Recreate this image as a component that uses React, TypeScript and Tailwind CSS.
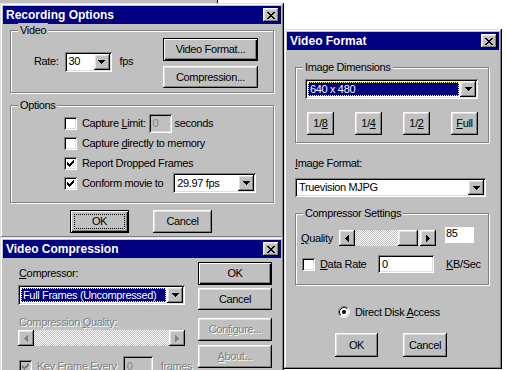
import type { ReactNode } from "react";

const winBevel =
  "shadow-[inset_-1px_-1px_0_#000,inset_1px_1px_0_#dfdfdf,inset_-2px_-2px_0_#808080,inset_2px_2px_0_#fff]";
const raised =
  "shadow-[inset_-1px_-1px_0_#000,inset_1px_1px_0_#fff,inset_-2px_-2px_0_#808080,inset_2px_2px_0_#dfdfdf]";
const defBevel =
  "shadow-[inset_0_0_0_1px_#000,inset_2px_2px_0_#fff,inset_-2px_-2px_0_#000,inset_-3px_-3px_0_#808080]";
const sunken =
  "shadow-[inset_1px_1px_0_#808080,inset_-1px_-1px_0_#fff,inset_2px_2px_0_#000,inset_-2px_-2px_0_#dfdfdf]";
const dim = "text-[#808080] [text-shadow:1px_1px_0_#fff]";
const checker = "bg-[repeating-conic-gradient(#c0c0c0_0_25%,#fff_0_50%)] bg-[length:2px_2px]";

function U({ children }: { children: ReactNode }) {
  return <span className="underline decoration-1 underline-offset-[1px]">{children}</span>;
}

function CloseBtn() {
  return (
    <div className={`w-[16px] h-[14px] bg-[#c0c0c0] flex items-center justify-center ${raised}`}>
      <svg width="8" height="7" viewBox="0 0 8 7" shapeRendering="crispEdges">
        <path
          d="M0 0h2v1H0z M6 0h2v1H6z M1 1h2v1H1z M5 1h2v1H5z M2 2h4v1H2z M3 3h2v1H3z M2 4h4v1H2z M1 5h2v1H1z M5 5h2v1H5z M0 6h2v1H0z M6 6h2v1H6z"
          fill="#000"
        />
      </svg>
    </div>
  );
}

function Win({ title, className, children }: { title: string; className: string; children: ReactNode }) {
  return (
    <div className={`absolute bg-[#c0c0c0] p-[3px] flex flex-col overflow-hidden ${winBevel} ${className}`}>
      <div className="h-[18px] shrink-0 bg-[#000080] flex items-center justify-between pl-[3px] pr-[2px]">
        <span className="text-white font-bold text-[12px] leading-none tracking-normal">{title}</span>
        <CloseBtn />
      </div>
      {children}
    </div>
  );
}

function Btn({
  children,
  className = "",
  def = false,
  focus = false,
  disabled = false,
}: {
  children: ReactNode;
  className?: string;
  def?: boolean;
  focus?: boolean;
  disabled?: boolean;
}) {
  return (
    <div
      className={`relative shrink-0 flex items-center justify-center bg-[#c0c0c0] ${def ? defBevel : raised} ${disabled ? dim : "text-black"} ${className}`}
    >
      {focus && <span className="absolute inset-[4px] border border-dotted border-black" />}
      {children}
    </div>
  );
}

function DropBtn() {
  return (
    <div className={`w-[16px] h-full shrink-0 bg-[#c0c0c0] flex items-center justify-center ${raised}`}>
      <svg width="7" height="4" viewBox="0 0 7 4" shapeRendering="crispEdges">
        <path d="M0 0h7v1H0z M1 1h5v1H1z M2 2h3v1H2z M3 3h1v1H3z" fill="#000" />
      </svg>
    </div>
  );
}

function Combo({ text, className, selected = false }: { text: string; className: string; selected?: boolean }) {
  return (
    <div className={`flex bg-white p-[2px] shrink-0 ${sunken} ${className}`}>
      <div className="flex-1 flex items-stretch p-[1px]">
        {selected ? (
          <span className="flex-1 flex items-center bg-[#000080] text-white border border-dotted border-[#ffff80] pl-[1px]">
            {text}
          </span>
        ) : (
          <span className="flex items-center pl-[1px]">{text}</span>
        )}
      </div>
      <DropBtn />
    </div>
  );
}

function Field({ children, className, disabled = false }: { children: ReactNode; className: string; disabled?: boolean }) {
  return (
    <div
      className={`flex items-center shrink-0 pl-[4px] ${disabled ? "bg-[#c0c0c0] text-[#808080]" : "bg-white"} ${sunken} ${className}`}
    >
      {children}
    </div>
  );
}

function Check({ checked = false, disabled = false }: { checked?: boolean; disabled?: boolean }) {
  return (
    <div
      className={`w-[13px] h-[13px] shrink-0 flex items-center justify-center ${disabled ? "bg-[#c0c0c0]" : "bg-white"} ${sunken}`}
    >
      {checked && (
        <svg width="7" height="7" viewBox="0 0 7 7" shapeRendering="crispEdges">
          <path
            d="M6 0h1v1H6z M5 1h2v1H5z M0 2h1v1H0z M4 2h3v1H4z M0 3h2v1H0z M3 3h3v1H3z M0 4h5v1H0z M1 5h3v1H1z M2 6h1v1H2z"
            fill={disabled ? "#808080" : "#000"}
          />
        </svg>
      )}
    </div>
  );
}

function Radio() {
  return (
    <svg width="12" height="12" viewBox="0 0 12 12" className="shrink-0">
      <circle cx="6" cy="6" r="4.5" fill="#fff" />
      <path d="M2.11 9.89A5.5 5.5 0 0 1 9.89 2.11" fill="none" stroke="#808080" />
      <path d="M9.89 2.11A5.5 5.5 0 0 1 2.11 9.89" fill="none" stroke="#fff" />
      <path d="M2.82 9.18A4.5 4.5 0 0 1 9.18 2.82" fill="none" stroke="#000" />
      <path d="M9.18 2.82A4.5 4.5 0 0 1 2.82 9.18" fill="none" stroke="#dfdfdf" />
      <circle cx="6" cy="6" r="2" fill="#000" />
    </svg>
  );
}

function Arrow({ dir, disabled = false }: { dir: "left" | "right"; disabled?: boolean }) {
  return (
    <div className={`w-[16px] h-full shrink-0 bg-[#c0c0c0] flex items-center justify-center ${raised}`}>
      <svg width="4" height="7" viewBox="0 0 4 7" shapeRendering="crispEdges">
        <path
          d={
            dir === "left"
              ? "M3 0h1v7H3z M2 1h1v5H2z M1 2h1v3H1z M0 3h1v1H0z"
              : "M0 0h1v7H0z M1 1h1v5H1z M2 2h1v3H2z M3 3h1v1H3z"
          }
          fill={disabled ? "#808080" : "#000"}
        />
      </svg>
    </div>
  );
}

function Group({ label, className, children }: { label: ReactNode; className: string; children?: ReactNode }) {
  return (
    <div className={`relative shrink-0 border border-[#808080] shadow-[inset_1px_1px_0_#fff,1px_1px_0_#fff] ${className}`}>
      <span className="absolute -top-[8px] left-[7px] bg-[#c0c0c0] px-[2px] leading-[14px]">{label}</span>
      {children}
    </div>
  );
}

export default function App() {
  return (
    <div className="relative w-[506px] h-[370px] bg-white overflow-hidden whitespace-nowrap font-['Liberation_Sans',Arial,sans-serif] text-[11px] tracking-[-0.35px] text-black">
      {/* bit of a window behind, peeking out at the top */}
      <div className="absolute left-0 top-0 w-[218px] h-[3px] bg-[#c0c0c0] border-r border-black" />

      {/* Recording Options */}
      <Win title="Recording Options" className="left-0 top-[3px] w-[284px] h-[235px]">
        <div className="px-[7px] pt-[6px] flex flex-col">
          <Group label="Video" className="w-[264px] h-[63px]">
            <div className="flex h-full">
              <div className="flex items-center pl-[23px]">
                <span>Rate:</span>
                <Combo className="ml-[6px] w-[47px] h-[20px]" text="30" />
                <span className="ml-[8px]">fps</span>
              </div>
              <div className="ml-auto mr-[15px] mt-[7px] flex flex-col gap-[5px]">
                <Btn def className="w-[95px] h-[23px]">
                  Video Format...
                </Btn>
                <Btn className="w-[95px] h-[22px]">Compression...</Btn>
              </div>
            </div>
          </Group>

          <Group label="Options" className="mt-[12px] w-[264px] h-[98px]">
            <div className="pl-[53px] pt-[7px] flex flex-col">
              <div className="h-[20px] flex items-center">
                <Check />
                <span className="ml-[5px]">
                  Capture <U>L</U>imit:
                </span>
                <Field disabled className="ml-[3px] w-[23px] h-[19px]">
                  0
                </Field>
                <span className="ml-[3px]">seconds</span>
              </div>
              <div className="h-[20px] flex items-center">
                <Check />
                <span className="ml-[5px]">
                  Capture <U>d</U>irectly to memory
                </span>
              </div>
              <div className="h-[20px] flex items-center">
                <Check checked />
                <span className="ml-[5px]">Report Dropped Frames</span>
              </div>
              <div className="h-[20px] flex items-center">
                <Check checked />
                <span className="ml-[5px]">Conform movie to</span>
                <Combo className="ml-[10px] w-[83px] h-[20px]" text="29.97 fps" />
              </div>
            </div>
          </Group>

          <div className="flex mt-[7px] ml-[60px]">
            <Btn def focus className="w-[59px] h-[23px]">
              OK
            </Btn>
            <Btn className="ml-[24px] w-[59px] h-[23px]">Cancel</Btn>
          </div>
        </div>
      </Win>

      {/* Video Compression */}
      <Win title="Video Compression" className="left-0 top-[237px] w-[284px] h-[140px]">
        <div className="flex pl-[15px]">
          <div className="w-[167px] shrink-0 flex flex-col">
            <span className="mt-[8px] h-[14px] leading-[14px] pl-[1px]">
              <U>C</U>ompressor:
            </span>
            <Combo selected className="mt-[5px] w-[167px] h-[20px]" text="Full Frames (Uncompressed)" />
            <span className={`mt-[10px] h-[14px] leading-[14px] pl-[1px] ${dim}`}>
              Compression <U>Q</U>uality:
            </span>
            <div className="mt-[1px] w-[167px] h-[16px] flex">
              <Arrow dir="left" disabled />
              <div className={`flex-1 ${checker}`} />
              <Arrow dir="right" disabled />
            </div>
            <div className="mt-[10px] h-[20px] flex items-center pl-[1px]">
              <Check checked disabled />
              <span className={`ml-[5px] shrink-0 ${dim}`}>
                <U>K</U>ey Frame Every
              </span>
              <Field disabled className="ml-[6px] w-[30px] h-[20px]">
                0
              </Field>
              <span className={`ml-[8px] shrink-0 ${dim}`}>frames</span>
            </div>
          </div>
          <div className="ml-[13px] w-[74px] shrink-0 flex flex-col">
            <Btn def className="mt-[4px] h-[23px]">
              OK
            </Btn>
            <Btn className="mt-[3px] h-[22px]">Cancel</Btn>
            <Btn disabled className="mt-[8px] h-[23px]">
              Con<U>f</U>igure...
            </Btn>
            <Btn disabled className="mt-[4px] h-[23px]">
              <U>A</U>bout...
            </Btn>
          </div>
        </div>
      </Win>

      {/* Video Format */}
      <Win title="Video Format" className="left-[284px] top-[29px] w-[218px] h-[340px]">
        <div className="pl-[8px] flex flex-col">
          <Group label="Image Dimensions" className="mt-[17px] w-[194px] h-[76px]">
            <div className="pl-[9px] pt-[11px] flex flex-col">
              <Combo selected className="w-[173px] h-[20px]" text="640 x 480" />
              <div className="flex mt-[13px] ml-[2px] gap-[21px]">
                <Btn className="w-[27px] h-[23px]">
                  1/<U>8</U>
                </Btn>
                <Btn className="w-[27px] h-[23px]">
                  1/<U>4</U>
                </Btn>
                <Btn className="w-[27px] h-[23px]">
                  1/<U>2</U>
                </Btn>
                <Btn className="w-[27px] h-[23px]">
                  <U>F</U>ull
                </Btn>
              </div>
            </div>
          </Group>

          <span className="mt-[13px] h-[14px] leading-[14px]">
            <U>I</U>mage Format:
          </span>
          <Combo className="mt-[8px] w-[191px] h-[19px]" text="Truevision MJPG" />

          <Group label="Compressor Settings" className="mt-[16px] w-[194px] h-[72px]">
            <div className="pt-[15px] flex flex-col">
              <div className="h-[18px] flex items-center pl-[5px]">
                <span className="w-[38px]">
                  <U>Q</U>uality
                </span>
                <div className="w-[97px] h-[16px] flex">
                  <Arrow dir="left" />
                  <div className={`w-[43px] ${checker}`} />
                  <div className={`w-[20px] bg-[#c0c0c0] ${raised}`} />
                  <div className={`flex-1 ${checker}`} />
                  <Arrow dir="right" />
                </div>
                <div className="ml-[9px] mb-[6px] w-[29px] h-[16px] bg-white pl-[1px] leading-[13px]">85</div>
              </div>
              <div className="mt-[8px] h-[18px] flex items-center pl-[6px]">
                <Check />
                <span className="ml-[5px] w-[58px]">
                  <U>D</U>ata Rate
                </span>
                <Field className="w-[56px] h-[18px]">0</Field>
                <span className="ml-[12px]">
                  <U>K</U>B/Sec
                </span>
              </div>
            </div>
          </Group>

          <div className="mt-[19px] h-[16px] flex items-center pl-[43px]">
            <Radio />
            <span className="ml-[5px]">
              Direct Disk <U>A</U>ccess
            </span>
          </div>

          <div className="flex mt-[13px] ml-[40px]">
            <Btn className="w-[43px] h-[24px]">OK</Btn>
            <Btn className="ml-[25px] w-[44px] h-[24px]">Cancel</Btn>
          </div>
        </div>
      </Win>
    </div>
  );
}
